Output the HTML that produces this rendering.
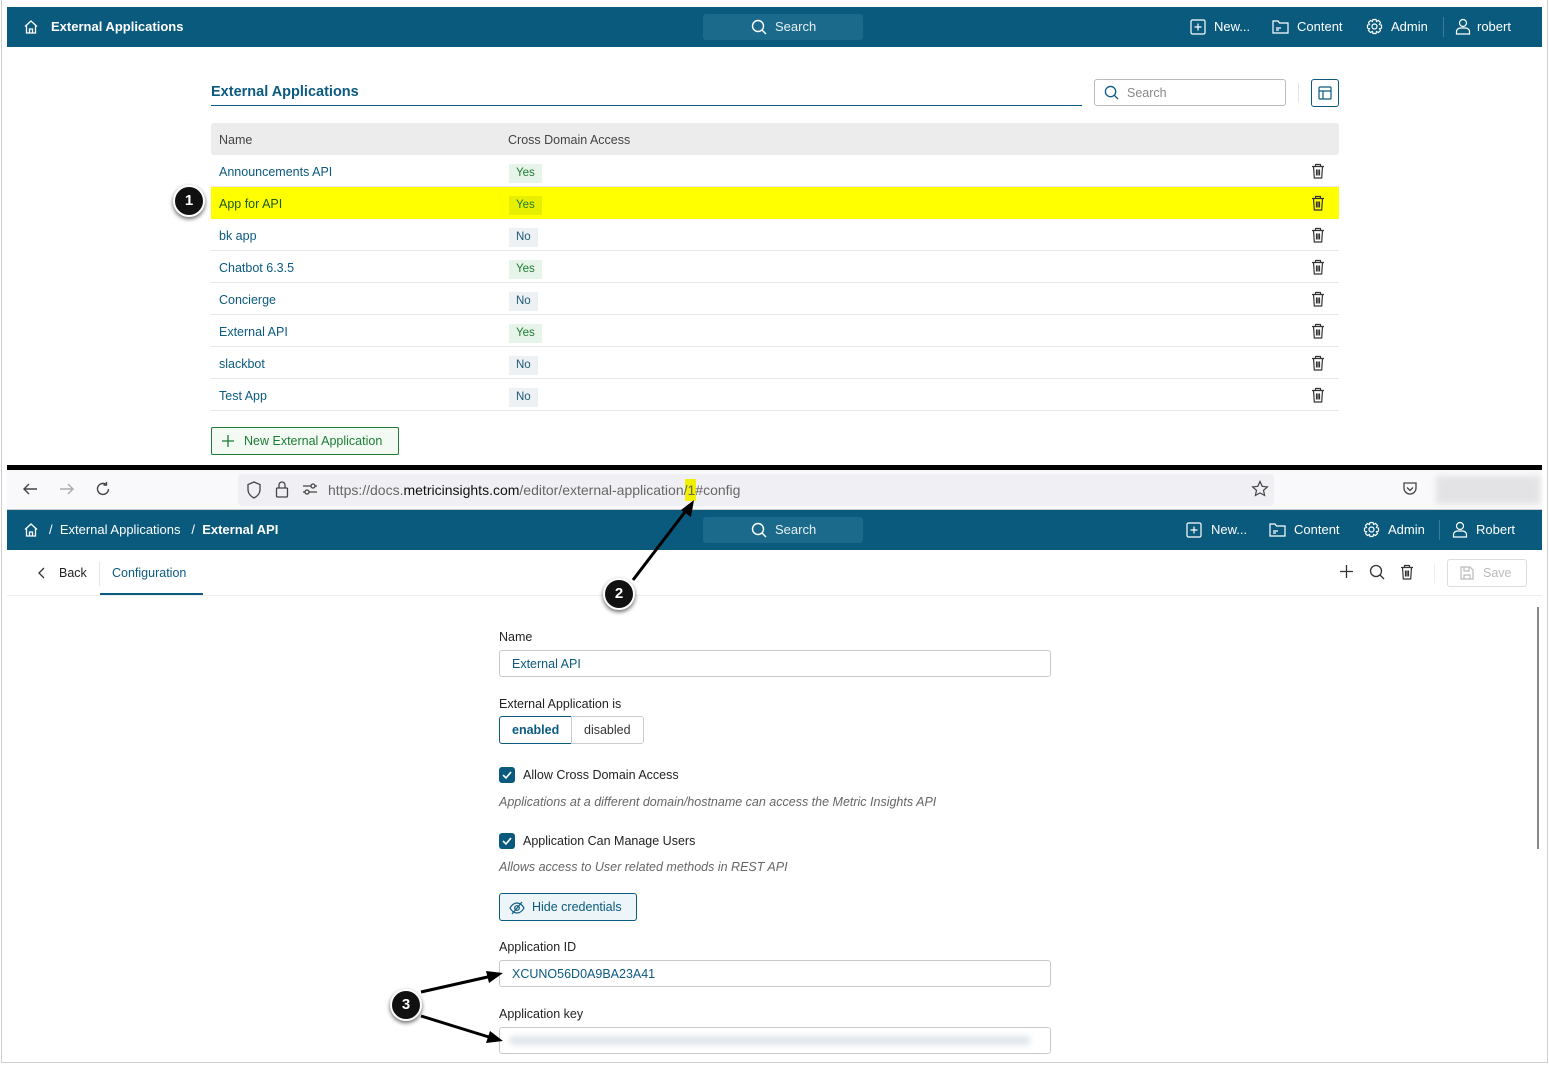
<!DOCTYPE html>
<html><head><meta charset="utf-8"><style>
*{box-sizing:border-box;margin:0;padding:0}
body{width:1549px;height:1065px;position:relative;background:#fff;font-family:"Liberation Sans",sans-serif;font-size:13px;color:#222;overflow:hidden}
.a{position:absolute}
.nav{background:#0a5a7e;color:#fff;height:40px;left:7px;width:1535px}
.nav .t{position:absolute;top:12px;font-size:13px;color:#fff}
.srch{position:absolute;left:696px;top:7px;width:160px;height:26px;background:#1b6a8c;border-radius:3px;color:#e8f0f4;font-size:13px;padding:5px 0 0 72px}
.row{position:absolute;left:211px;width:1128px;height:32px;border-bottom:1px solid #e6e6e6}
.row .n{position:absolute;left:8px;top:10px;color:#0b5a80;font-size:12.5px}
.badge{position:absolute;left:298px;top:9px;height:19px;padding:3px 7px;font-size:11.5px}
.y{background:#e6f4ea;color:#1e7b34}.no{background:#eef1f3;color:#1b5876}
.tr{position:absolute;left:1100px;top:8px}
.lbl{position:absolute;left:499px;font-size:12.5px;color:#222}
.inp{position:absolute;left:499px;width:552px;height:27px;border:1px solid #c9c9c9;border-radius:3px;padding:6px 12px;color:#0b5a80;font-size:12.5px}
.cb{position:absolute;left:499px;width:16px;height:16px;background:#0a5a7e;border-radius:3px}
.it{position:absolute;left:499px;font-style:italic;color:#666;font-size:12.5px}
.circ{position:absolute;width:32px;height:32px;border-radius:50%;background:#111;border:2px solid #fff;box-shadow:0 2px 4px rgba(0,0,0,.6);color:#fff;font-weight:bold;font-size:15px;text-align:center;line-height:28px}
</style></head><body>
<div class="a" style="left:1px;top:0;width:1547px;height:1063px;border:1px solid #cfcfcf;border-top:none"></div>

<div class="a nav" style="top:7px">
<svg class="a" style="left:16px;top:12px" width="16" height="16" viewBox="0 0 16 16" fill="none" stroke="#fff" stroke-width="1.3"><path d="M2 7.5L8 2l6 5.5M3.5 6.5V14h9V6.5M6.5 14v-4h3v4"/></svg>
<div class="t" style="left:44px;font-weight:bold">External Applications</div>
<div class="srch"><svg class="a" style="left:48px;top:5px" width="16" height="16" viewBox="0 0 16 16" fill="none" stroke="#fff" stroke-width="1.4"><circle cx="7" cy="7" r="5.5"/><path d="M11 11l4 4"/></svg>Search</div>
<svg class="a" style="left:1183px;top:12px" width="16" height="16" viewBox="0 0 16 16" fill="none" stroke="#fff" stroke-width="1.2"><rect x="1" y="1" width="14" height="14" rx="1.5"/><path d="M8 4.5v7M4.5 8h7"/></svg>
<div class="t" style="left:1207px">New...</div>
<svg class="a" style="left:1265px;top:12px" width="17" height="16" viewBox="0 0 17 16" fill="none" stroke="#fff" stroke-width="1.2"><path d="M1 2h5l1.5 2H16v10H1zM4 9h5M4 11h3"/></svg>
<div class="t" style="left:1290px">Content</div>
<svg class="a" style="left:1359px;top:11px" width="17" height="17" viewBox="0 0 17 17" fill="none" stroke="#fff" stroke-width="1.2"><circle cx="8.5" cy="8.5" r="2.5"/><path d="M7 1.5h3l.5 2 2-1 2 2-1 2 2 .5v3l-2 .5 1 2-2 2-2-1-.5 2H7l-.5-2-2 1-2-2 1-2-2-.5V7l2-.5-1-2 2-2 2 1z"/></svg>
<div class="t" style="left:1384px">Admin</div>
<div class="a" style="left:1436px;top:10px;width:1px;height:20px;background:#3a7d9b"></div>
<svg class="a" style="left:1448px;top:11px" width="16" height="17" viewBox="0 0 16 17" fill="none" stroke="#fff" stroke-width="1.2"><circle cx="8" cy="5" r="3.5"/><path d="M1.5 16v-2.5c0-2 2-3.5 4-3.5h5c2 0 4 1.5 4 3.5V16z"/></svg>
<div class="t" style="left:1470px">robert</div>
</div>

<div class="a" style="left:211px;top:84px;font-size:14.5px;font-weight:bold;color:#0b5a80">External Applications</div>
<div class="a" style="left:211px;top:105px;width:871px;height:1px;background:#0b5a80"></div>
<div class="a" style="left:1094px;top:79px;width:192px;height:27px;border:1px solid #bbb;border-radius:3px;color:#888;font-size:12.5px;padding:6px 0 0 32px">Search
<svg class="a" style="left:9px;top:5px" width="15" height="15" viewBox="0 0 16 16" fill="none" stroke="#0b5a80" stroke-width="1.4"><circle cx="7" cy="7" r="5.5"/><path d="M11 11l4 4"/></svg></div>
<div class="a" style="left:1298px;top:83px;width:1px;height:20px;background:#e4e4e4"></div>
<div class="a" style="left:1311px;top:79px;width:28px;height:28px;border:1px solid #0b5a80;border-radius:3px"><svg class="a" style="left:6px;top:6px" width="14" height="14" viewBox="0 0 14 14" fill="none" stroke="#0b5a80" stroke-width="1.2"><rect x="1" y="1" width="12" height="12" rx="1"/><path d="M1 5h12M5 5v8"/></svg></div>
<div class="a" style="left:211px;top:123px;width:1128px;height:32px;background:#ececec;border-radius:3px"></div>
<div class="a" style="left:219px;top:133px;color:#444;font-size:12.5px">Name</div>
<div class="a" style="left:508px;top:133px;color:#444;font-size:12.5px">Cross Domain Access</div>

<div class="row" style="top:155px"><div class="n">Announcements API</div><div class="badge y">Yes</div><svg class="tr" width="14" height="16" viewBox="0 0 14 16" fill="none" stroke="#333" stroke-width="1.2"><path d="M1 3.5h12M4.5 3.5V1.5h5v2M2.5 3.5l.8 11.5h7.4l.8-11.5M5.5 6.5v6M7 6.5v6M8.5 6.5v6"/></svg></div>
<div class="row" style="top:187px;background:#ffff00;border-bottom-color:#ffff00"><div class="n" style="color:#1a5a18">App for API</div><div class="badge" style="background:#e8ee00;color:#1e7b34">Yes</div><svg class="tr" width="14" height="16" viewBox="0 0 14 16" fill="none" stroke="#333" stroke-width="1.2"><path d="M1 3.5h12M4.5 3.5V1.5h5v2M2.5 3.5l.8 11.5h7.4l.8-11.5M5.5 6.5v6M7 6.5v6M8.5 6.5v6"/></svg></div>
<div class="row" style="top:219px"><div class="n">bk app</div><div class="badge no">No</div><svg class="tr" width="14" height="16" viewBox="0 0 14 16" fill="none" stroke="#333" stroke-width="1.2"><path d="M1 3.5h12M4.5 3.5V1.5h5v2M2.5 3.5l.8 11.5h7.4l.8-11.5M5.5 6.5v6M7 6.5v6M8.5 6.5v6"/></svg></div>
<div class="row" style="top:251px"><div class="n">Chatbot 6.3.5</div><div class="badge y">Yes</div><svg class="tr" width="14" height="16" viewBox="0 0 14 16" fill="none" stroke="#333" stroke-width="1.2"><path d="M1 3.5h12M4.5 3.5V1.5h5v2M2.5 3.5l.8 11.5h7.4l.8-11.5M5.5 6.5v6M7 6.5v6M8.5 6.5v6"/></svg></div>
<div class="row" style="top:283px"><div class="n">Concierge</div><div class="badge no">No</div><svg class="tr" width="14" height="16" viewBox="0 0 14 16" fill="none" stroke="#333" stroke-width="1.2"><path d="M1 3.5h12M4.5 3.5V1.5h5v2M2.5 3.5l.8 11.5h7.4l.8-11.5M5.5 6.5v6M7 6.5v6M8.5 6.5v6"/></svg></div>
<div class="row" style="top:315px"><div class="n">External API</div><div class="badge y">Yes</div><svg class="tr" width="14" height="16" viewBox="0 0 14 16" fill="none" stroke="#333" stroke-width="1.2"><path d="M1 3.5h12M4.5 3.5V1.5h5v2M2.5 3.5l.8 11.5h7.4l.8-11.5M5.5 6.5v6M7 6.5v6M8.5 6.5v6"/></svg></div>
<div class="row" style="top:347px"><div class="n">slackbot</div><div class="badge no">No</div><svg class="tr" width="14" height="16" viewBox="0 0 14 16" fill="none" stroke="#333" stroke-width="1.2"><path d="M1 3.5h12M4.5 3.5V1.5h5v2M2.5 3.5l.8 11.5h7.4l.8-11.5M5.5 6.5v6M7 6.5v6M8.5 6.5v6"/></svg></div>
<div class="row" style="top:379px"><div class="n">Test App</div><div class="badge no">No</div><svg class="tr" width="14" height="16" viewBox="0 0 14 16" fill="none" stroke="#333" stroke-width="1.2"><path d="M1 3.5h12M4.5 3.5V1.5h5v2M2.5 3.5l.8 11.5h7.4l.8-11.5M5.5 6.5v6M7 6.5v6M8.5 6.5v6"/></svg></div>

<div class="a" style="left:211px;top:427px;width:188px;height:28px;border:1px solid #1e7b34;border-radius:2px;background:#f3faf4;color:#1e7b34;font-size:12.5px;padding:6px 0 0 32px">New External Application
<svg class="a" style="left:10px;top:7px" width="12" height="12" viewBox="0 0 12 12" stroke="#1e7b34" stroke-width="1.3"><path d="M6 0v12M0 6h12"/></svg></div>
<div class="circ" style="left:173px;top:185px">1</div>

<div class="a" style="left:7px;top:465px;width:1535px;height:5px;background:#000"></div>

<div class="a" style="left:7px;top:470px;width:1535px;height:40px;background:#f9f9fb;border-bottom:1px solid #ccc"></div>
<svg class="a" style="left:22px;top:481px" width="16" height="16" viewBox="0 0 16 16" fill="none" stroke="#444" stroke-width="1.4"><path d="M15 8H2M7 3L2 8l5 5"/></svg>
<svg class="a" style="left:59px;top:481px" width="16" height="16" viewBox="0 0 16 16" fill="none" stroke="#aaa" stroke-width="1.4"><path d="M1 8h13M9 3l5 5-5 5"/></svg>
<svg class="a" style="left:95px;top:481px" width="16" height="16" viewBox="0 0 16 16" fill="none" stroke="#444" stroke-width="1.4"><path d="M13.5 8A5.5 5.5 0 1 1 11 3.3M11.5 1v3h-3"/></svg>
<div class="a" style="left:238px;top:474px;width:1036px;height:32px;background:#f0f0f4;border-radius:4px"></div>
<svg class="a" style="left:246px;top:481px" width="16" height="18" viewBox="0 0 16 18" fill="none" stroke="#444" stroke-width="1.3"><path d="M8 1l6 2.5v5c0 4-3 7-6 8.5C5 15.5 2 12.5 2 8.5v-5z"/></svg>
<svg class="a" style="left:275px;top:480px" width="14" height="18" viewBox="0 0 14 18" fill="none" stroke="#444" stroke-width="1.3"><rect x="1.5" y="8" width="11" height="9" rx="1"/><path d="M4 8V5a3 3 0 0 1 6 0v3"/></svg>
<svg class="a" style="left:302px;top:483px" width="16" height="12" viewBox="0 0 16 12" fill="none" stroke="#444" stroke-width="1.3"><path d="M1 3h8M13 3h2M1 9h2M7 9h8"/><circle cx="11" cy="3" r="2"/><circle cx="5" cy="9" r="2"/></svg>
<div class="a" style="left:685px;top:479px;width:11px;height:22px;background:#f0f000"></div>
<div class="a" style="left:328px;top:482px;font-size:14px;color:#666">https://docs.<span style="color:#111">metricinsights.com</span>/editor/external-application/1#config</div>
<svg class="a" style="left:1251px;top:480px" width="18" height="18" viewBox="0 0 18 18" fill="none" stroke="#444" stroke-width="1.2"><path d="M9 1.5l2.2 4.8 5.2.6-3.9 3.5 1.1 5.1L9 12.9l-4.6 2.6 1.1-5.1L1.6 6.9l5.2-.6z"/></svg>
<svg class="a" style="left:1402px;top:481px" width="16" height="16" viewBox="0 0 16 16" fill="none" stroke="#444" stroke-width="1.3"><path d="M2 2h12v5a6 6 0 0 1-12 0z"/><path d="M5 6.5l3 3 3-3"/></svg>
<div class="a" style="left:1436px;top:476px;width:104px;height:28px;background:#e3e3e6;filter:blur(3px)"></div>

<div class="a nav" style="top:510px">
<svg class="a" style="left:16px;top:12px" width="16" height="16" viewBox="0 0 16 16" fill="none" stroke="#fff" stroke-width="1.3"><path d="M2 7.5L8 2l6 5.5M3.5 6.5V14h9V6.5M6.5 14v-4h3v4"/></svg>
<div class="t" style="left:42px">/&nbsp;&nbsp;External Applications&nbsp;&nbsp;&nbsp;/&nbsp;&nbsp;<b>External API</b></div>
<div class="srch"><svg class="a" style="left:48px;top:5px" width="16" height="16" viewBox="0 0 16 16" fill="none" stroke="#fff" stroke-width="1.4"><circle cx="7" cy="7" r="5.5"/><path d="M11 11l4 4"/></svg>Search</div>
<svg class="a" style="left:1179px;top:12px" width="16" height="16" viewBox="0 0 16 16" fill="none" stroke="#fff" stroke-width="1.2"><rect x="1" y="1" width="14" height="14" rx="1.5"/><path d="M8 4.5v7M4.5 8h7"/></svg>
<div class="t" style="left:1204px">New...</div>
<svg class="a" style="left:1262px;top:12px" width="17" height="16" viewBox="0 0 17 16" fill="none" stroke="#fff" stroke-width="1.2"><path d="M1 2h5l1.5 2H16v10H1zM4 9h5M4 11h3"/></svg>
<div class="t" style="left:1287px">Content</div>
<svg class="a" style="left:1356px;top:11px" width="17" height="17" viewBox="0 0 17 17" fill="none" stroke="#fff" stroke-width="1.2"><circle cx="8.5" cy="8.5" r="2.5"/><path d="M7 1.5h3l.5 2 2-1 2 2-1 2 2 .5v3l-2 .5 1 2-2 2-2-1-.5 2H7l-.5-2-2 1-2-2 1-2-2-.5V7l2-.5-1-2 2-2 2 1z"/></svg>
<div class="t" style="left:1381px">Admin</div>
<div class="a" style="left:1432px;top:10px;width:1px;height:20px;background:#3a7d9b"></div>
<svg class="a" style="left:1445px;top:11px" width="16" height="17" viewBox="0 0 16 17" fill="none" stroke="#fff" stroke-width="1.2"><circle cx="8" cy="5" r="3.5"/><path d="M1.5 16v-2.5c0-2 2-3.5 4-3.5h5c2 0 4 1.5 4 3.5V16z"/></svg>
<div class="t" style="left:1469px">Robert</div>
</div>

<svg class="a" style="left:38px;top:567px" width="8" height="12" viewBox="0 0 8 12" fill="none" stroke="#333" stroke-width="1.3"><path d="M6 1L1 6l5 5"/></svg>
<div class="a" style="left:59px;top:566px;font-size:12.5px">Back</div>
<div class="a" style="left:99px;top:562px;width:1px;height:24px;background:#e4e4e4"></div>
<div class="a" style="left:112px;top:566px;font-size:12.5px;color:#0b5a80">Configuration</div>
<div class="a" style="left:100px;top:593px;width:103px;height:2px;background:#0b5a80"></div>
<div class="a" style="left:7px;top:595px;width:1535px;height:1px;background:#eee"></div>
<svg class="a" style="left:1340px;top:565px" width="13" height="13" viewBox="0 0 12 12" stroke="#333" stroke-width="1.2"><path d="M6 0v12M0 6h12"/></svg>
<svg class="a" style="left:1369px;top:564px" width="16" height="16" viewBox="0 0 16 16" fill="none" stroke="#333" stroke-width="1.3"><circle cx="7" cy="7" r="5.5"/><path d="M11 11l4 4"/></svg>
<svg class="a" style="left:1400px;top:564px" width="14" height="16" viewBox="0 0 14 16" fill="none" stroke="#333" stroke-width="1.2"><path d="M1 3.5h12M4.5 3.5V1.5h5v2M2.5 3.5l.8 11.5h7.4l.8-11.5M5.5 6.5v6M7 6.5v6M8.5 6.5v6"/></svg>
<div class="a" style="left:1434px;top:563px;width:1px;height:20px;background:#eee"></div>
<div class="a" style="left:1447px;top:559px;width:80px;height:28px;border:1px solid #ddd;border-radius:3px;color:#bbb;font-size:12.5px;padding:6px 0 0 35px">Save
<svg class="a" style="left:12px;top:6px" width="14" height="14" viewBox="0 0 14 14" fill="none" stroke="#bbb" stroke-width="1.2"><path d="M1 1h9l3 3v9H1zM4 1v4h5V1M4 13V9h6v4"/></svg></div>
<div class="a" style="left:1537px;top:607px;width:2px;height:242px;background:#888"></div>

<div class="lbl" style="top:630px">Name</div>
<div class="inp" style="top:650px">External API</div>
<div class="lbl" style="top:697px">External Application is</div>
<div class="a" style="left:499px;top:716px;width:73px;height:28px;border:1px solid #0b5a80;border-radius:3px 0 0 3px;color:#0b5a80;font-weight:bold;font-size:12.5px;padding:6px 0 0 12px">enabled</div>
<div class="a" style="left:571px;top:716px;width:73px;height:28px;border:1px solid #ccc;border-radius:0 3px 3px 0;color:#333;font-size:12.5px;padding:6px 0 0 12px">disabled</div>
<div class="cb" style="top:767px"><svg width="16" height="16" viewBox="0 0 16 16" fill="none" stroke="#fff" stroke-width="1.6"><path d="M4 8l3 3 5-6"/></svg></div>
<div class="a" style="left:523px;top:768px;font-size:12.5px">Allow Cross Domain Access</div>
<div class="it" style="top:795px">Applications at a different domain/hostname can access the Metric Insights API</div>
<div class="cb" style="top:833px"><svg width="16" height="16" viewBox="0 0 16 16" fill="none" stroke="#fff" stroke-width="1.6"><path d="M4 8l3 3 5-6"/></svg></div>
<div class="a" style="left:523px;top:834px;font-size:12.5px">Application Can Manage Users</div>
<div class="it" style="top:860px">Allows access to User related methods in REST API</div>
<div class="a" style="left:499px;top:893px;width:138px;height:28px;border:1px solid #0b5a80;border-radius:3px;background:#eef5f8;color:#0b5a80;font-size:12.5px;padding:6px 0 0 32px">Hide credentials
<svg class="a" style="left:9px;top:6px" width="16" height="16" viewBox="0 0 16 16" fill="none" stroke="#0b5a80" stroke-width="1.2"><path d="M1 8c2-3.5 4.5-5 7-5s5 1.5 7 5c-2 3.5-4.5 5-7 5S3 11.5 1 8z"/><circle cx="8" cy="8" r="2.3"/><path d="M3 14L13 2"/></svg></div>
<div class="lbl" style="top:940px">Application ID</div>
<div class="inp" style="top:960px">XCUNO56D0A9BA23A41</div>
<div class="lbl" style="top:1007px">Application key</div>
<div class="inp" style="top:1027px"><div class="a" style="left:10px;top:8px;width:520px;height:9px;background:#dfe6ec;filter:blur(3px)"></div></div>

<div class="circ" style="left:603px;top:578px">2</div>
<div class="circ" style="left:390px;top:989px">3</div>
<svg class="a" style="left:0;top:0" width="1549" height="1065" fill="#000" stroke="#000">
<path d="M633 580L688 508" stroke-width="3"/><path d="M694 500l-3 17-10-7z" stroke="none"/>
<path d="M421 992L492 976" stroke-width="3"/><path d="M503 973l-14 10-3-12z" stroke="none"/>
<path d="M421 1016L492 1038" stroke-width="3"/><path d="M503 1041l-17 2 4-12z" stroke="none"/>
</svg>
</body></html>
